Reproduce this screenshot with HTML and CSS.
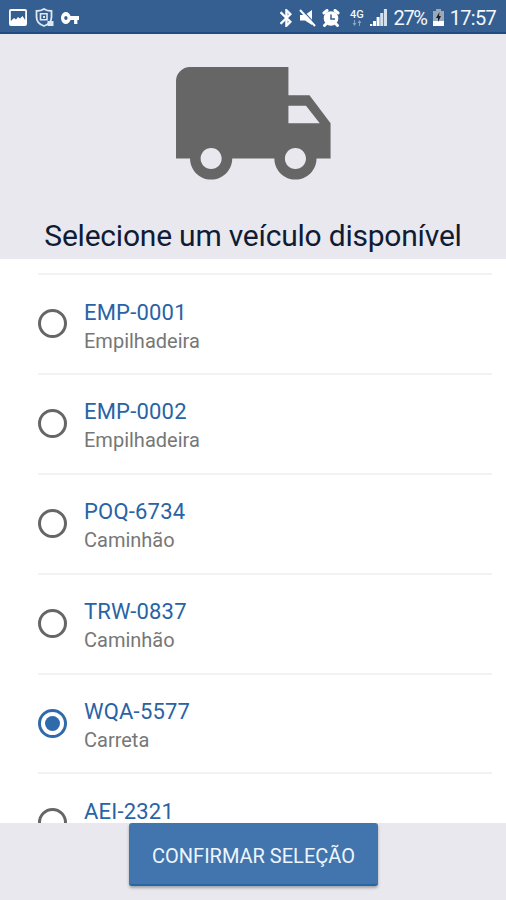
FILE: index.html
```
<!DOCTYPE html>
<html lang="pt-BR">
<head>
  <meta charset="UTF-8">
  <meta name="viewport" content="width=device-width, initial-scale=1.0">
  <title>Selecione um veículo</title>
  <link rel="stylesheet" href="styles.css">
</head>
<body>
  <div class="statusbar">
    <div class="status-left">
      <svg class="i-image" width="18" height="17" viewBox="0 0 18 17"><path fill="#fff" fill-rule="evenodd" d="M2 0h14a2 2 0 0 1 2 2v13a2 2 0 0 1-2 2H2a2 2 0 0 1-2-2V2a2 2 0 0 1 2-2zM1.800 2v10l3.200-3 2 1.500L9 8l2 1.500L13.500 7l2.700 4V2z"/></svg>
      <svg class="i-shield" width="19" height="19" viewBox="0 0 19 19"><path fill="none" stroke="#dfe8f3" stroke-width="1.8" d="M9 1C7 2.4 4.500 3 1.500 3v6c0 4.500 3 7.500 7.500 9 4.500-1.500 7.500-4.500 7.500-9V3C13.500 3 11 2.400 9 1z"/><path fill="none" stroke="#dfe8f3" stroke-width="1.600" d="M5.500 5.800h6.500v6H5.500z"/><path fill="#dfe8f3" d="M8 8h2v2H8zM12.500 13h6v5h-6z"/></svg>
      <svg class="i-key" width="18" height="12" viewBox="1 6 22 12" preserveAspectRatio="none"><path fill="#fff" d="M12.650 10C11.830 7.670 9.610 6 7 6c-3.310 0-6 2.690-6 6s2.690 6 6 6c2.610 0 4.830-1.670 5.650-4H17v4h4v-4h2v-4H12.650zM7 14c-1.100 0-2-.9-2-2s.9-2 2-2 2 .9 2 2-.9 2-2 2z"/></svg>
    </div>
    <div class="status-right">
      <svg class="i-bt" width="12" height="18" viewBox="5 2 13 20" preserveAspectRatio="none"><path fill="#fff" stroke="#fff" stroke-width=".6" d="M17.710 7.710L12 2h-1v7.590L6.410 5 5 6.410 10.590 12 5 17.590 6.410 19 11 14.410V22h1l5.710-5.710-4.300-4.290 4.300-4.290zM13 5.830l1.880 1.880L13 9.590V5.830zm1.880 10.460L13 18.170v-3.760l1.880 1.880z"/></svg>
      <svg class="i-mute" width="17" height="18" viewBox="0 0 17 18"><path fill="#fff" d="M1 6h5l7-5v15l-7-4.500H1z"/><path stroke="#355f90" stroke-width="1.200" d="M2.800 .5l14 15.200"/><path stroke="#fff" stroke-width="2" d="M1 1l15 16"/></svg>
      <svg class="i-alarm" width="18" height="18" viewBox="0 0 18 18"><path stroke="#fff" stroke-width="3" stroke-linecap="round" d="M2 4l3-2.500M16 4l-3-2.500M4 15l-1.500 1.500M14 15l1.500 1.500"/><circle cx="9" cy="9.500" r="7.300" fill="#fff"/><path fill="none" stroke="#355f90" stroke-width="1.500" d="M9 5.500V10h4"/></svg>
      <div class="network">
        <span>4G</span>
        <svg width="10" height="6" viewBox="0 0 10 6"><path fill="#8ba6c5" d="M2 0h1v3h1.500L2.500 6 .5 3H2zM7 6h1V3h1.500l-2-3-2 3H7z"/></svg>
      </div>
      <svg class="i-signal" width="17" height="17" viewBox="0 0 17 17"><path fill="#fff" d="M0 15h2.300v2H0zM3 12h3v5H3zM6.600 8h3v9h-3z"/><path fill="#d3dfec" d="M10.200 4h3v13h-3zM13.900 0H17v17h-3.100z"/></svg>
      <span class="percent">27%</span>
      <svg class="i-battery" width="11" height="17" viewBox="0 0 11 17"><path fill="#9da8b7" d="M3 0h5v2h3v10H0V2h3z"/><path fill="#fff" d="M0 12h11v5H0z"/><path fill="#142033" d="M6.500 3L3 9h2v4l3-6H6z"/></svg>
      <span class="clock">17:57</span>
    </div>
  </div>

  <header class="header">
    <svg class="truck" viewBox="0 0 24 24"><path d="M20 8h-3V4H3c-1.100 0-2 .9-2 2v11h2c0 1.660 1.340 3 3 3s3-1.340 3-3h6c0 1.660 1.340 3 3 3s3-1.340 3-3h2v-5l-3-4zM6 18.500c-.83 0-1.500-.67-1.500-1.500s.67-1.500 1.500-1.500 1.500.67 1.500 1.500-.67 1.500-1.500 1.500zm13.500-9l1.960 2.500H17V9.500h2.500zm-1.500 9c-.83 0-1.500-.67-1.500-1.500s.67-1.500 1.500-1.500 1.500.67 1.500 1.500-.67 1.500-1.500 1.500z"/></svg>
    <h1>Selecione um veículo disponível</h1>
  </header>

  <main class="list">
    <label class="item">
      <span class="radio"></span>
      <span class="info"><span class="plate">EMP-0001</span><span class="type">Empilhadeira</span></span>
    </label>
    <label class="item">
      <span class="radio"></span>
      <span class="info"><span class="plate">EMP-0002</span><span class="type">Empilhadeira</span></span>
    </label>
    <label class="item">
      <span class="radio"></span>
      <span class="info"><span class="plate">POQ-6734</span><span class="type">Caminhão</span></span>
    </label>
    <label class="item">
      <span class="radio"></span>
      <span class="info"><span class="plate">TRW-0837</span><span class="type">Caminhão</span></span>
    </label>
    <label class="item">
      <span class="radio checked"></span>
      <span class="info"><span class="plate">WQA-5577</span><span class="type">Carreta</span></span>
    </label>
    <label class="item">
      <span class="radio"></span>
      <span class="info"><span class="plate">AEI-2321</span></span>
    </label>
  </main>

  <footer class="footer">
    <button class="confirm">CONFIRMAR SELEÇÃO</button>
  </footer>
</body>
</html>
```
FILE: styles.css
```
* {
  box-sizing: border-box;
}
body {
  margin: 0;
  height: 900px;
  display: flex;
  flex-direction: column;
  overflow: hidden;
  font-family: Roboto, sans-serif;
  background: #fff;
}
svg {
  display: block;
  flex: none;
}

/* status bar */
.statusbar {
  flex: none;
  height: 34px;
  padding: 0 10px 0 9px;
  display: flex;
  justify-content: space-between;
  background: #355f90;
  border-bottom: 2px solid #1f4b80;
  color: #f4f8fc;
}
.status-left,
.status-right {
  display: flex;
  align-items: center;
  padding-top: 3px;
}
.i-shield {
  margin-left: 8px;
}
.i-key {
  margin-left: 7px;
}
.i-mute {
  margin-left: 7px;
}
.i-alarm {
  margin-left: 6px;
}
.network {
  margin-left: 9px;
  width: 15px;
  display: flex;
  flex-direction: column;
  align-items: center;
  font-size: 11px;
  font-weight: 500;
  line-height: 11px;
}
.i-signal {
  margin-left: 6px;
}
.percent {
  margin-left: 6px;
  font-size: 20px;
  letter-spacing: -1.300px;
}
.i-battery {
  margin-left: 6px;
}
.clock {
  margin-left: 6px;
  font-size: 20px;
  letter-spacing: -0.700px;
}

/* header */
.header {
  flex: none;
  height: 225px;
  padding-top: 5px;
  display: flex;
  flex-direction: column;
  align-items: center;
  background: #e9e8ee;
}
.truck {
  width: 168.600px;
  height: 168.600px;
  fill: #666;
}
h1 {
  margin: 10px 0 0;
  font-size: 30px;
  font-weight: 400;
  line-height: 36px;
  letter-spacing: -0.220px;
  white-space: nowrap;
  color: #101c35;
}

/* vehicle list */
.list {
  flex: none;
  height: 564px;
  padding: 14px 14px 0 38px;
  overflow: hidden;
}
.item {
  height: 99.900px;
  display: flex;
  border-top: 2px solid #f2f2f2;
}
.radio {
  flex: none;
  width: 29px;
  height: 29px;
  margin-top: 34px;
  display: flex;
  align-items: center;
  justify-content: center;
  border: 3px solid #666;
  border-radius: 50%;
}
.radio.checked {
  border-color: #2f6aaa;
}
.radio.checked::after {
  content: "";
  width: 15px;
  height: 15px;
  border-radius: 50%;
  background: #2f6aaa;
}
.info {
  margin: 23.500px 0 0 17px;
  display: flex;
  flex-direction: column;
}
.plate {
  font-size: 22px;
  line-height: 28px;
  letter-spacing: 0.200px;
  color: #2863a5;
}
.type {
  font-size: 20px;
  line-height: 28px;
  color: #777;
}

/* footer */
.footer {
  flex: none;
  height: 77px;
  display: flex;
  justify-content: center;
  align-items: flex-start;
  background: #e9e8ee;
}
.confirm {
  width: 249px;
  height: 63px;
  margin-left: 1px;
  padding: 4px 0 0;
  border: none;
  border-bottom: 2px solid #2567a5;
  border-radius: 3px;
  background: #4275ad;
  color: #eef5fc;
  font-family: inherit;
  font-size: 20px;
  white-space: nowrap;
  box-shadow: 0 2px 3px rgba(0, 0, 0, 0.300);
}
```
